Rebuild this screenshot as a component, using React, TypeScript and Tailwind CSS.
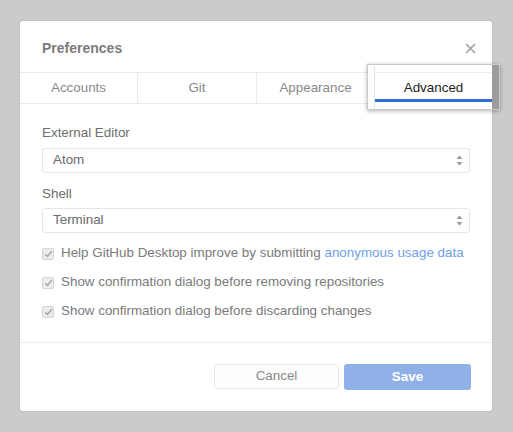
import React from 'react';

const font = { fontFamily: '"Liberation Sans", Arial, sans-serif' };

const tabs = [
  { label: 'Accounts', w: 'w-[117px]' },
  { label: 'Git', w: 'w-[119px]' },
  { label: 'Appearance', w: 'w-[118px]' },
  { label: '', w: 'flex-1' }, // Advanced digambar di kotak sorotan
];

const options = [
  { text: 'Help GitHub Desktop improve by submitting ', link: 'anonymous usage data' },
  { text: 'Show confirmation dialog before removing repositories' },
  { text: 'Show confirmation dialog before discarding changes' },
];

// Kotak select dengan panah atas/bawah
function SelectBox({ value }: { value: string }) {
  return (
    <div className="h-[25px] w-full rounded-[3px] border border-[#e4e6e8] bg-white flex items-center justify-between pl-[10px] pr-[6px] text-[13.4px] text-[#6b6b6b]">
      <span>{value}</span>
      <svg width="7" height="11" viewBox="0 0 7 11">
        <path d="M3.5 0.5 L6.5 4 L0.5 4 Z" fill="#9a9a9a" />
        <path d="M3.5 10.5 L6.5 7 L0.5 7 Z" fill="#9a9a9a" />
      </svg>
    </div>
  );
}

function CheckBox() {
  return (
    <span className="w-[12px] h-[12px] rounded-[2px] border border-[#d4d4d4] bg-[#ececec] flex items-center justify-center">
      <svg width="9" height="8" viewBox="0 0 9 8">
        <path d="M1.2 4.2 L3.4 6.4 L7.8 1.2" fill="none" stroke="#a8a8a8" strokeWidth="1.6" />
      </svg>
    </span>
  );
}

export default function App() {
  return (
    <div className="w-[513px] h-[432px] bg-[#cbcbcb] pt-[21px] pl-[20px]" style={font}>
      <div className="relative w-[472px] h-[390px] bg-white rounded-[3px] shadow-[0_0_2px_rgba(0,0,0,0.15)] flex flex-col">
        {/* header */}
        <div className="h-[51px] flex items-center justify-between pl-[22px] pr-[16px] pt-[3px]">
          <span className="text-[14px] font-bold text-[#7c7c7c]">Preferences</span>
          <svg width="11" height="11" viewBox="0 0 11 11">
            <path d="M1 1 L10 10 M10 1 L1 10" stroke="#a0a0a0" strokeWidth="1.6" />
          </svg>
        </div>

        {/* tabs */}
        <div className="h-[32px] flex border-y border-[#eaeaea]">
          {tabs.map((t, i) => (
            <div
              key={i}
              className={`${t.w} flex items-center justify-center pt-[1px] text-[13.4px] text-[#8a8a8a] ${i > 0 ? 'border-l border-[#eaeaea]' : ''}`}
            >
              {t.label}
            </div>
          ))}
        </div>

        {/* sorotan tab Advanced */}
        <div className="absolute left-[347px] top-[43px] w-[133px] h-[46px] bg-white border border-[#c8c8c8] shadow-[0_1px_4px_rgba(0,0,0,0.3)] flex">
          <div className="w-[6px] h-full" />
          <div className="flex-1 flex flex-col border-l border-[#e4e4e4] mt-[1px]">
            <div className="h-[7px] border-b border-[#ededed]" />
            <div className="flex-1 flex items-center justify-center pt-[4px] text-[13.4px] text-[#222]">Advanced</div>
            <div className="h-[3px] bg-[#2f6fd6] mb-[7px]" />
          </div>
          <div className="w-[7px] h-full bg-[#9c9c9c]" />
        </div>

        {/* isi */}
        <div className="flex-1 px-[22px] pt-[21px]">
          <div className="text-[13.4px] leading-[16px] text-[#6e6e6e]">External Editor</div>
          <div className="mt-[7px]">
            <SelectBox value="Atom" />
          </div>
          <div className="mt-[13px] text-[13.4px] leading-[16px] text-[#6e6e6e]">Shell</div>
          <div className="mt-[6px]">
            <SelectBox value="Terminal" />
          </div>
          <div className="mt-[6px] flex flex-col">
            {options.map((o) => (
              <div key={o.text} className="h-[29px] flex items-center gap-[7px] text-[13.4px] text-[#7a7a7a]">
                <CheckBox />
                <span>
                  {o.text}
                  {o.link && <span className="text-[#6fa0e6]">{o.link}</span>}
                </span>
              </div>
            ))}
          </div>
        </div>

        {/* footer */}
        <div className="h-[69px] border-t border-[#ededed] flex justify-end gap-[5px] pt-[21px] pr-[21px]">
          <button className="w-[125px] h-[25px] rounded-[3px] border border-[#e6e8ea] bg-[#fdfdfd] text-[13.4px] text-[#8a8a8a]">
            Cancel
          </button>
          <button className="w-[127px] h-[26px] rounded-[3px] bg-[#90b1e7] text-[13.4px] font-bold text-white">
            Save
          </button>
        </div>
      </div>
    </div>
  );
}
